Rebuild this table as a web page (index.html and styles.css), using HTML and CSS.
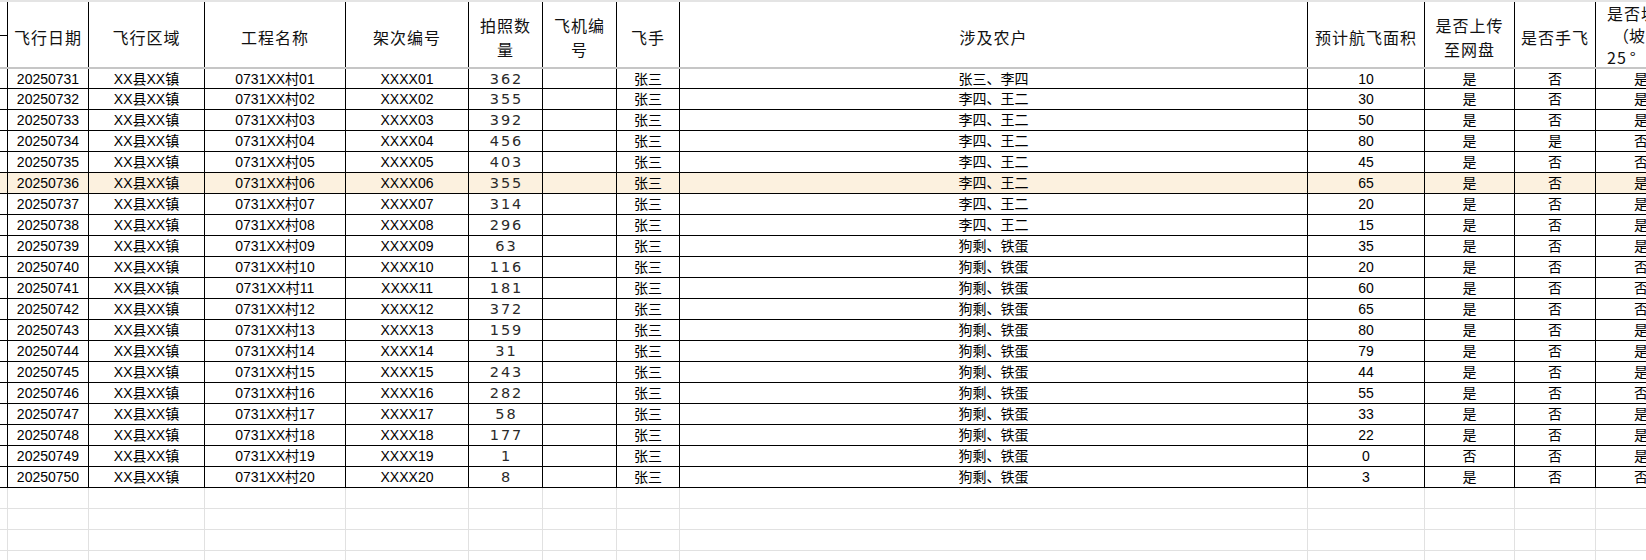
FILE: index.html
```html
<!DOCTYPE html>
<html lang="zh-CN">
<head>
<meta charset="utf-8">
<title>飞行记录</title>
<link rel="stylesheet" href="styles.css">
</head>
<body>
<div class="sheet">
  <div class="topband"></div>
  <div class="row head">
    <div class="cell c0"><span class="tick"></span></div>
    <div class="cell">飞行日期</div>
    <div class="cell">飞行区域</div>
    <div class="cell">工程名称</div>
    <div class="cell">架次编号</div>
    <div class="cell two">拍照数<br>量</div>
    <div class="cell two">飞机编<br>号</div>
    <div class="cell">飞手</div>
    <div class="cell">涉及农户</div>
    <div class="cell">预计航飞面积</div>
    <div class="cell two">是否上传<br>至网盘</div>
    <div class="cell">是否手飞</div>
    <div class="cell three"><div class="lines">是否坡地<br><span class="par">（</span>坡度＞<br>25<span class="deg">°</span>）</div></div>
  </div>
  <div class="freeze"></div>

  <div class="row data first"><div class="cell"></div><div class="cell">20250731</div><div class="cell">XX县XX镇</div><div class="cell">0731XX村01</div><div class="cell">XXXX01</div><div class="cell num">362</div><div class="cell"></div><div class="cell">张三</div><div class="cell">张三、李四</div><div class="cell">10</div><div class="cell">是</div><div class="cell">否</div><div class="cell">是</div></div>
  <div class="row data"><div class="cell"></div><div class="cell">20250732</div><div class="cell">XX县XX镇</div><div class="cell">0731XX村02</div><div class="cell">XXXX02</div><div class="cell num">355</div><div class="cell"></div><div class="cell">张三</div><div class="cell">李四、王二</div><div class="cell">30</div><div class="cell">是</div><div class="cell">否</div><div class="cell">是</div></div>
  <div class="row data"><div class="cell"></div><div class="cell">20250733</div><div class="cell">XX县XX镇</div><div class="cell">0731XX村03</div><div class="cell">XXXX03</div><div class="cell num">392</div><div class="cell"></div><div class="cell">张三</div><div class="cell">李四、王二</div><div class="cell">50</div><div class="cell">是</div><div class="cell">否</div><div class="cell">是</div></div>
  <div class="row data"><div class="cell"></div><div class="cell">20250734</div><div class="cell">XX县XX镇</div><div class="cell">0731XX村04</div><div class="cell">XXXX04</div><div class="cell num">456</div><div class="cell"></div><div class="cell">张三</div><div class="cell">李四、王二</div><div class="cell">80</div><div class="cell">是</div><div class="cell">是</div><div class="cell">否</div></div>
  <div class="row data"><div class="cell"></div><div class="cell">20250735</div><div class="cell">XX县XX镇</div><div class="cell">0731XX村05</div><div class="cell">XXXX05</div><div class="cell num">403</div><div class="cell"></div><div class="cell">张三</div><div class="cell">李四、王二</div><div class="cell">45</div><div class="cell">是</div><div class="cell">否</div><div class="cell">否</div></div>
  <div class="row data hl"><div class="cell"></div><div class="cell">20250736</div><div class="cell">XX县XX镇</div><div class="cell">0731XX村06</div><div class="cell">XXXX06</div><div class="cell num">355</div><div class="cell"></div><div class="cell">张三</div><div class="cell">李四、王二</div><div class="cell">65</div><div class="cell">是</div><div class="cell">否</div><div class="cell">是</div></div>
  <div class="row data"><div class="cell"></div><div class="cell">20250737</div><div class="cell">XX县XX镇</div><div class="cell">0731XX村07</div><div class="cell">XXXX07</div><div class="cell num">314</div><div class="cell"></div><div class="cell">张三</div><div class="cell">李四、王二</div><div class="cell">20</div><div class="cell">是</div><div class="cell">否</div><div class="cell">是</div></div>
  <div class="row data"><div class="cell"></div><div class="cell">20250738</div><div class="cell">XX县XX镇</div><div class="cell">0731XX村08</div><div class="cell">XXXX08</div><div class="cell num">296</div><div class="cell"></div><div class="cell">张三</div><div class="cell">李四、王二</div><div class="cell">15</div><div class="cell">是</div><div class="cell">否</div><div class="cell">是</div></div>
  <div class="row data"><div class="cell"></div><div class="cell">20250739</div><div class="cell">XX县XX镇</div><div class="cell">0731XX村09</div><div class="cell">XXXX09</div><div class="cell num">63</div><div class="cell"></div><div class="cell">张三</div><div class="cell">狗剩、铁蛋</div><div class="cell">35</div><div class="cell">是</div><div class="cell">否</div><div class="cell">是</div></div>
  <div class="row data"><div class="cell"></div><div class="cell">20250740</div><div class="cell">XX县XX镇</div><div class="cell">0731XX村10</div><div class="cell">XXXX10</div><div class="cell num">116</div><div class="cell"></div><div class="cell">张三</div><div class="cell">狗剩、铁蛋</div><div class="cell">20</div><div class="cell">是</div><div class="cell">否</div><div class="cell">否</div></div>
  <div class="row data"><div class="cell"></div><div class="cell">20250741</div><div class="cell">XX县XX镇</div><div class="cell">0731XX村11</div><div class="cell">XXXX11</div><div class="cell num">181</div><div class="cell"></div><div class="cell">张三</div><div class="cell">狗剩、铁蛋</div><div class="cell">60</div><div class="cell">是</div><div class="cell">否</div><div class="cell">否</div></div>
  <div class="row data"><div class="cell"></div><div class="cell">20250742</div><div class="cell">XX县XX镇</div><div class="cell">0731XX村12</div><div class="cell">XXXX12</div><div class="cell num">372</div><div class="cell"></div><div class="cell">张三</div><div class="cell">狗剩、铁蛋</div><div class="cell">65</div><div class="cell">是</div><div class="cell">否</div><div class="cell">否</div></div>
  <div class="row data"><div class="cell"></div><div class="cell">20250743</div><div class="cell">XX县XX镇</div><div class="cell">0731XX村13</div><div class="cell">XXXX13</div><div class="cell num">159</div><div class="cell"></div><div class="cell">张三</div><div class="cell">狗剩、铁蛋</div><div class="cell">80</div><div class="cell">是</div><div class="cell">否</div><div class="cell">是</div></div>
  <div class="row data"><div class="cell"></div><div class="cell">20250744</div><div class="cell">XX县XX镇</div><div class="cell">0731XX村14</div><div class="cell">XXXX14</div><div class="cell num">31</div><div class="cell"></div><div class="cell">张三</div><div class="cell">狗剩、铁蛋</div><div class="cell">79</div><div class="cell">是</div><div class="cell">否</div><div class="cell">是</div></div>
  <div class="row data"><div class="cell"></div><div class="cell">20250745</div><div class="cell">XX县XX镇</div><div class="cell">0731XX村15</div><div class="cell">XXXX15</div><div class="cell num">243</div><div class="cell"></div><div class="cell">张三</div><div class="cell">狗剩、铁蛋</div><div class="cell">44</div><div class="cell">是</div><div class="cell">否</div><div class="cell">是</div></div>
  <div class="row data"><div class="cell"></div><div class="cell">20250746</div><div class="cell">XX县XX镇</div><div class="cell">0731XX村16</div><div class="cell">XXXX16</div><div class="cell num">282</div><div class="cell"></div><div class="cell">张三</div><div class="cell">狗剩、铁蛋</div><div class="cell">55</div><div class="cell">是</div><div class="cell">否</div><div class="cell">否</div></div>
  <div class="row data"><div class="cell"></div><div class="cell">20250747</div><div class="cell">XX县XX镇</div><div class="cell">0731XX村17</div><div class="cell">XXXX17</div><div class="cell num">58</div><div class="cell"></div><div class="cell">张三</div><div class="cell">狗剩、铁蛋</div><div class="cell">33</div><div class="cell">是</div><div class="cell">否</div><div class="cell">是</div></div>
  <div class="row data"><div class="cell"></div><div class="cell">20250748</div><div class="cell">XX县XX镇</div><div class="cell">0731XX村18</div><div class="cell">XXXX18</div><div class="cell num">177</div><div class="cell"></div><div class="cell">张三</div><div class="cell">狗剩、铁蛋</div><div class="cell">22</div><div class="cell">是</div><div class="cell">否</div><div class="cell">是</div></div>
  <div class="row data"><div class="cell"></div><div class="cell">20250749</div><div class="cell">XX县XX镇</div><div class="cell">0731XX村19</div><div class="cell">XXXX19</div><div class="cell num">1</div><div class="cell"></div><div class="cell">张三</div><div class="cell">狗剩、铁蛋</div><div class="cell">0</div><div class="cell">否</div><div class="cell">否</div><div class="cell">是</div></div>
  <div class="row data"><div class="cell"></div><div class="cell">20250750</div><div class="cell">XX县XX镇</div><div class="cell">0731XX村20</div><div class="cell">XXXX20</div><div class="cell num">8</div><div class="cell"></div><div class="cell">张三</div><div class="cell">狗剩、铁蛋</div><div class="cell">3</div><div class="cell">是</div><div class="cell">否</div><div class="cell">否</div></div>

  <div class="row empty"><div class="cell"></div><div class="cell"></div><div class="cell"></div><div class="cell"></div><div class="cell"></div><div class="cell"></div><div class="cell"></div><div class="cell"></div><div class="cell"></div><div class="cell"></div><div class="cell"></div><div class="cell"></div><div class="cell"></div></div>
  <div class="row empty"><div class="cell"></div><div class="cell"></div><div class="cell"></div><div class="cell"></div><div class="cell"></div><div class="cell"></div><div class="cell"></div><div class="cell"></div><div class="cell"></div><div class="cell"></div><div class="cell"></div><div class="cell"></div><div class="cell"></div></div>
  <div class="row empty"><div class="cell"></div><div class="cell"></div><div class="cell"></div><div class="cell"></div><div class="cell"></div><div class="cell"></div><div class="cell"></div><div class="cell"></div><div class="cell"></div><div class="cell"></div><div class="cell"></div><div class="cell"></div><div class="cell"></div></div>
  <div class="row empty"><div class="cell"></div><div class="cell"></div><div class="cell"></div><div class="cell"></div><div class="cell"></div><div class="cell"></div><div class="cell"></div><div class="cell"></div><div class="cell"></div><div class="cell"></div><div class="cell"></div><div class="cell"></div><div class="cell"></div></div>
</div>
</body>
</html>
```
FILE: styles.css
```css
html, body {
  margin: 0;
  padding: 0;
  background: #ffffff;
}
body {
  width: 1646px;
  height: 560px;
  overflow: hidden;
  font-family: "Liberation Sans", "Noto Sans CJK SC", sans-serif;
  color: #000;
}
.sheet {
  width: 1687px;
}
.topband {
  height: 2px;
  background: #e4e4e4;
}
.row {
  display: grid;
  grid-template-columns: 8px 81px 116px 141px 123px 74px 74px 63px 628px 117px 90px 81px 91px;
  box-sizing: border-box;
}
.cell {
  box-sizing: border-box;
  border-right: 1px solid #000;
  display: flex;
  align-items: center;
  justify-content: center;
  text-align: center;
  white-space: nowrap;
  overflow: hidden;
}
.head {
  height: 65px;
}
.head .cell {
  font-family: "Noto Sans CJK SC", "Liberation Sans", sans-serif;
  font-size: 16px;
  letter-spacing: 1px;
  line-height: 24px;
  padding-top: 4px;
  color: #111;
}
.head .three {
  line-height: 22px;
  padding-top: 0;
  justify-content: flex-start;
  padding-left: 11px;
  text-align: left;
}
.lines {
  display: block;
  white-space: nowrap;
}
.par {
  display: inline-block;
  width: 22px;
  text-align: right;
  letter-spacing: 0;
}
.deg {
  display: inline-block;
  width: 22px;
  text-align: left;
  padding-left: 3px;
}
.tick {
  display: block;
  width: 7px;
  height: 1px;
  background: #000;
  margin-top: -2px;
}
.freeze {
  height: 2px;
  background: #c6c6c6;
}
.data {
  height: 21px;
  border-bottom: 1px solid #000;
  font-size: 14px;
  line-height: 20px;
}
.data.first {
  height: 20px;
}
.data.hl {
  background: #fcf1df;
}
.data .num {
  font-family: "DejaVu Sans", sans-serif;
  font-size: 14.5px;
  letter-spacing: 2px;
  padding-left: 2px;
  color: #2a2a2a;
}
.empty {
  height: 21px;
  border-bottom: 1px solid #e1e1e1;
}
.empty .cell {
  border-right-color: #e1e1e1;
}
```
